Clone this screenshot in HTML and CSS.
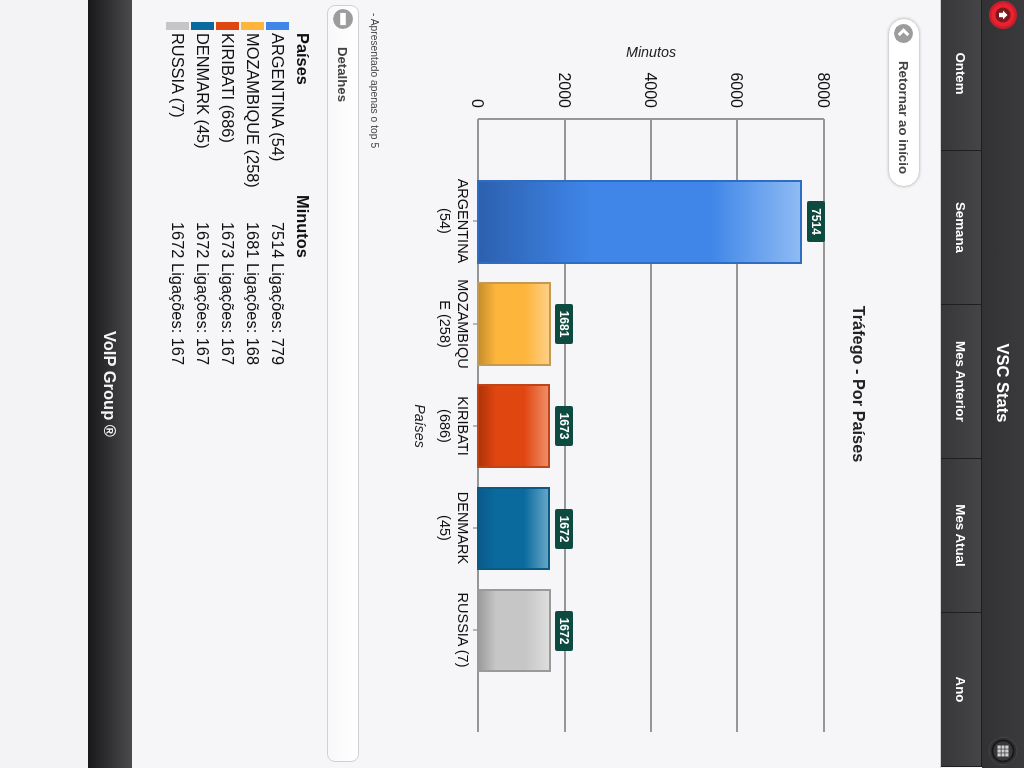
FILE: index.html
```html
<!DOCTYPE html>
<html lang="pt">
<head>
<meta charset="utf-8">
<title>VSC Stats</title>
<link rel="stylesheet" href="styles.css">
</head>
<body>
<div class="stage">
<div class="screen">
  <header class="topbar">
    <svg class="icon-home" viewBox="0 0 30 30" width="30" height="30">
      <circle cx="15" cy="15" r="14" fill="#c81e2c"/>
      <circle cx="15" cy="15" r="11.5" fill="#e8222f"/>
      <circle cx="15" cy="15" r="7.5" fill="#7e161e"/>
      <path d="M15 10.5 L19.5 15 H17.2 V19 H12.8 V15 H10.5 Z" fill="#fff"/>
    </svg>
    <h1 class="app-title">VSC Stats</h1>
    <svg class="icon-grid" viewBox="0 0 30 30" width="30" height="30">
      <circle cx="15" cy="15" r="14" fill="#2f2f31" stroke="#454547"/>
      <circle cx="15" cy="15" r="10.5" fill="#38383a" stroke="#161616" stroke-width="1.5"/>
      <path d="M9.5 9.5h3.2v3.2h-3.2zM13.4 9.5h3.2v3.2h-3.2zM17.3 9.5h3.2v3.2h-3.2zM9.5 13.4h3.2v3.2h-3.2zM13.4 13.4h3.2v3.2h-3.2zM17.3 13.4h3.2v3.2h-3.2zM9.5 17.3h3.2v3.2h-3.2zM13.4 17.3h3.2v3.2h-3.2zM17.3 17.3h3.2v3.2h-3.2z" fill="#cfcfcf"/>
    </svg>
  </header>
  <nav class="tabs">
    <a class="tab">Ontem</a>
    <a class="tab">Semana</a>
    <a class="tab">Mes Anterior</a>
    <a class="tab">Mes Atual</a>
    <a class="tab">Ano</a>
  </nav>

  <main class="content">
    <a class="pill-button">
      <svg class="round-icon" viewBox="0 0 18 18" width="19" height="19">
        <circle cx="9" cy="9" r="9" fill="#9c9c9c"/>
        <path d="M10.5 4.5 L6 9 L10.5 13.5" fill="none" stroke="#fff" stroke-width="3"/>
      </svg>
      <span>Retornar ao início</span>
    </a>
    <h2 class="chart-title">Tráfego - Por Países</h2>

    <svg class="chart" viewBox="0 0 768 440" width="768" height="440">
      <defs>
        <linearGradient id="g-blue" x1="0" y1="1" x2="0" y2="0">
          <stop offset="0" stop-color="#2c60ae"/><stop offset=".35" stop-color="#3f86e8"/><stop offset=".72" stop-color="#3f86e8"/><stop offset="1" stop-color="#8fbbf3"/>
        </linearGradient>
        <linearGradient id="g-gold" x1="0" y1="1" x2="0" y2="0">
          <stop offset="0" stop-color="#c48c2c"/><stop offset=".25" stop-color="#fdb53c"/><stop offset=".65" stop-color="#fdb53c"/><stop offset="1" stop-color="#fed08a"/>
        </linearGradient>
        <linearGradient id="g-red" x1="0" y1="1" x2="0" y2="0">
          <stop offset="0" stop-color="#ad3208"/><stop offset=".25" stop-color="#e04610"/><stop offset=".65" stop-color="#e04610"/><stop offset="1" stop-color="#f0906a"/>
        </linearGradient>
        <linearGradient id="g-teal" x1="0" y1="1" x2="0" y2="0">
          <stop offset="0" stop-color="#0a5a8a"/><stop offset=".25" stop-color="#0a6a9e"/><stop offset=".65" stop-color="#0a6a9e"/><stop offset="1" stop-color="#6aa8c8"/>
        </linearGradient>
        <linearGradient id="g-gray" x1="0" y1="1" x2="0" y2="0">
          <stop offset="0" stop-color="#999"/><stop offset=".25" stop-color="#c6c6c6"/><stop offset=".65" stop-color="#c6c6c6"/><stop offset="1" stop-color="#dedede"/>
        </linearGradient>
      </defs>

      <g class="grid">
        <path d="M119 25H732M119 112H732M119 198H732M119 284H732M119 371H732M119 25V371"/>
      </g>
      <g class="ticks">
        <path d="M221 371v5M324 371v5M426 371v5M528 371v5M630 371v5"/>
      </g>

      <g class="axis-num">
        <text x="108" y="31">8000</text>
        <text x="108" y="118">6000</text>
        <text x="108" y="204">4000</text>
        <text x="108" y="290">2000</text>
        <text x="108" y="377">0</text>
      </g>
      <text class="axis-title" transform="translate(57 198) rotate(-90)">Minutos</text>
      <text class="axis-title" x="426" y="434">Países</text>

      <g class="bar">
        <rect x="181" y="48" width="82" height="323" fill="url(#g-blue)" stroke="#2f6cc4" stroke-width="2"/>
        <rect x="283" y="299" width="82" height="72" fill="url(#g-gold)" stroke="#c49a50" stroke-width="2"/>
        <rect x="385" y="300" width="82" height="71" fill="url(#g-red)" stroke="#c0441a" stroke-width="2"/>
        <rect x="488" y="300" width="81" height="71" fill="url(#g-teal)" stroke="#0a5a85" stroke-width="2"/>
        <rect x="590" y="299" width="81" height="72" fill="url(#g-gray)" stroke="#9a9a9a" stroke-width="2"/>
      </g>

      <g class="value-box">
        <rect x="201" y="24" width="41" height="18" rx="2"/>
        <rect x="304" y="276" width="40" height="18" rx="2"/>
        <rect x="406" y="276" width="40" height="18" rx="2"/>
        <rect x="509" y="276" width="40" height="18" rx="2"/>
        <rect x="611" y="276" width="40" height="18" rx="2"/>
      </g>
      <g class="value-text">
        <text x="221.5" y="37">7514</text>
        <text x="324" y="289">1681</text>
        <text x="426" y="289">1673</text>
        <text x="529" y="289">1672</text>
        <text x="631" y="289">1672</text>
      </g>

      <g class="cat">
        <text x="221" y="391">ARGENTINA</text><text x="221" y="409">(54)</text>
        <text x="324" y="391">MOZAMBIQU</text><text x="324" y="409">E (258)</text>
        <text x="426" y="391">KIRIBATI</text><text x="426" y="409">(686)</text>
        <text x="528" y="391">DENMARK</text><text x="528" y="409">(45)</text>
        <text x="630" y="391">RUSSIA (7)</text>
      </g>
    </svg>

    <p class="note">- Apresentado apenas o top 5</p>

    <section class="details">
      <div class="details-head">
        <svg class="round-icon" viewBox="0 0 18 18" width="20" height="20">
          <circle cx="9" cy="9" r="9" fill="#9c9c9c"/>
          <rect x="3.5" y="6.5" width="11" height="5" fill="#fff"/>
        </svg>
        <span>Detalhes</span>
      </div>
    </section>

    <div class="table">
      <div class="thead"><span class="th-country">Países</span><span>Minutos</span></div>
      <div class="row"><i class="swatch sw-blue"></i><span>ARGENTINA (54)</span><span>7514 Ligações: 779</span></div>
      <div class="row"><i class="swatch sw-gold"></i><span>MOZAMBIQUE (258)</span><span>1681 Ligações: 168</span></div>
      <div class="row"><i class="swatch sw-red"></i><span>KIRIBATI (686)</span><span>1673 Ligações: 167</span></div>
      <div class="row"><i class="swatch sw-teal"></i><span>DENMARK (45)</span><span>1672 Ligações: 167</span></div>
      <div class="row"><i class="swatch sw-gray"></i><span>RUSSIA (7)</span><span>1672 Ligações: 167</span></div>
    </div>
  </main>

  <footer class="footer">VoIP Group ®</footer>
  <div class="below"></div>
</div>
</div>
</body>
</html>
```
FILE: styles.css
```css
html, body {
  margin: 0;
  width: 1024px;
  height: 768px;
  overflow: hidden;
  background: #f3f3f6;
}
.stage {
  width: 1024px;
  height: 768px;
  overflow: clip;
  contain: strict;
}
.screen {
  width: 768px;
  height: 1024px;
  display: flex;
  flex-direction: column;
  font-family: "Liberation Sans", Arial, sans-serif;
  color: #222;
  background: #f3f3f6;
  transform-origin: 0 0;
  transform: translateX(1024px) rotate(90deg);
  overflow: hidden;
  filter: blur(.5px);
}
.topbar {
  flex: 0 0 42px;
  display: flex;
  align-items: center;
  justify-content: space-between;
  padding: 0 2px 0 0;
  background: linear-gradient(#3a3a3c, #323234);
}
.app-title {
  margin: 0;
  font-size: 16.5px;
  font-weight: bold;
  color: #fff;
}
.tabs {
  flex: 0 0 40px;
  display: flex;
  width: 770px;
  margin-left: -3px;
  border-top: 1px solid #1d1d1d;
  background: linear-gradient(#454547, #373739);
}
.tab {
  flex: 0 0 154px;
  box-sizing: border-box;
  display: flex;
  align-items: center;
  justify-content: center;
  font-size: 13.3px;
  font-weight: bold;
  color: #fff;
  border-right: 1px solid #1f1f1f;
}
.content {
  flex: 0 0 809px;
  box-sizing: border-box;
  padding-top: 20px;
  background: #f6f6f9;
  border-top: 1px solid #cfcfcf;
}
.pill-button {
  display: flex;
  align-items: center;
  gap: 18px;
  box-sizing: border-box;
  width: 169px;
  height: 32px;
  margin-left: 18px;
  padding-left: 5px;
  border-radius: 16px;
  border: 1px solid #d4d4d6;
  box-shadow: 0 0 3px rgba(0, 0, 0, .18);
  background: #fff;
  font-size: 13.3px;
  font-weight: bold;
  color: #444;
}
.chart-title {
  margin: 19px 0 0;
  height: 20px;
  font-size: 16.3px;
  line-height: 20px;
  font-weight: bold;
  text-align: center;
  color: #222;
}
.chart { display: block; }
.grid path { fill: none; stroke: #969696; stroke-width: 2; }
.ticks path { fill: none; stroke: #777; stroke-width: 1; }
.axis-num text {
  font-size: 16px;
  text-anchor: end;
  fill: #111;
}
.axis-title {
  font-size: 14.3px;
  font-style: italic;
  text-anchor: middle;
  fill: #222;
}
.value-box rect { fill: #0d4a40; }
.value-text text {
  font-size: 12px;
  font-weight: bold;
  text-anchor: middle;
  fill: #fff;
}
.cat text {
  font-size: 14.5px;
  text-anchor: middle;
  fill: #111;
}
.note {
  margin: 28px 0 0 13px;
  height: 14px;
  font-size: 10.3px;
  line-height: 14px;
  color: #444;
}
.details {
  box-sizing: border-box;
  width: 757px;
  height: 32px;
  margin: 8px 0 0 5px;
  border: 1px solid #d0d0d2;
  border-radius: 8px;
  background: linear-gradient(#fff, #f8f8fa);
}
.details-head {
  display: flex;
  align-items: center;
  gap: 18px;
  height: 100%;
  padding-left: 3px;
  font-size: 13.2px;
  font-weight: bold;
  color: #444;
}
.round-icon { flex: none; }
.table {
  margin-top: 12px;
  font-size: 16.4px;
  color: #111;
}
.thead {
  display: flex;
  padding-left: 33px;
  height: 25px;
  line-height: 25px;
  font-weight: bold;
}
.th-country { width: 162px; }
.row {
  display: grid;
  grid-template-columns: 8px 186px auto;
  column-gap: 3px;
  align-items: center;
  height: 25px;
  padding-left: 22px;
}
.swatch { display: block; width: 8px; height: 23px; }
.sw-blue { background: #3f86e8; }
.sw-gold { background: #fdb53c; }
.sw-red { background: #e04610; }
.sw-teal { background: #0a6a9e; }
.sw-gray { background: #c6c6c6; }
.footer {
  flex: 0 0 44px;
  display: flex;
  align-items: center;
  justify-content: center;
  font-size: 16.5px;
  font-weight: bold;
  color: #f4f4f4;
  background: linear-gradient(#4b4b4d, #18181a);
}
.below { flex: 1; background: #f3f3f6; }
```
